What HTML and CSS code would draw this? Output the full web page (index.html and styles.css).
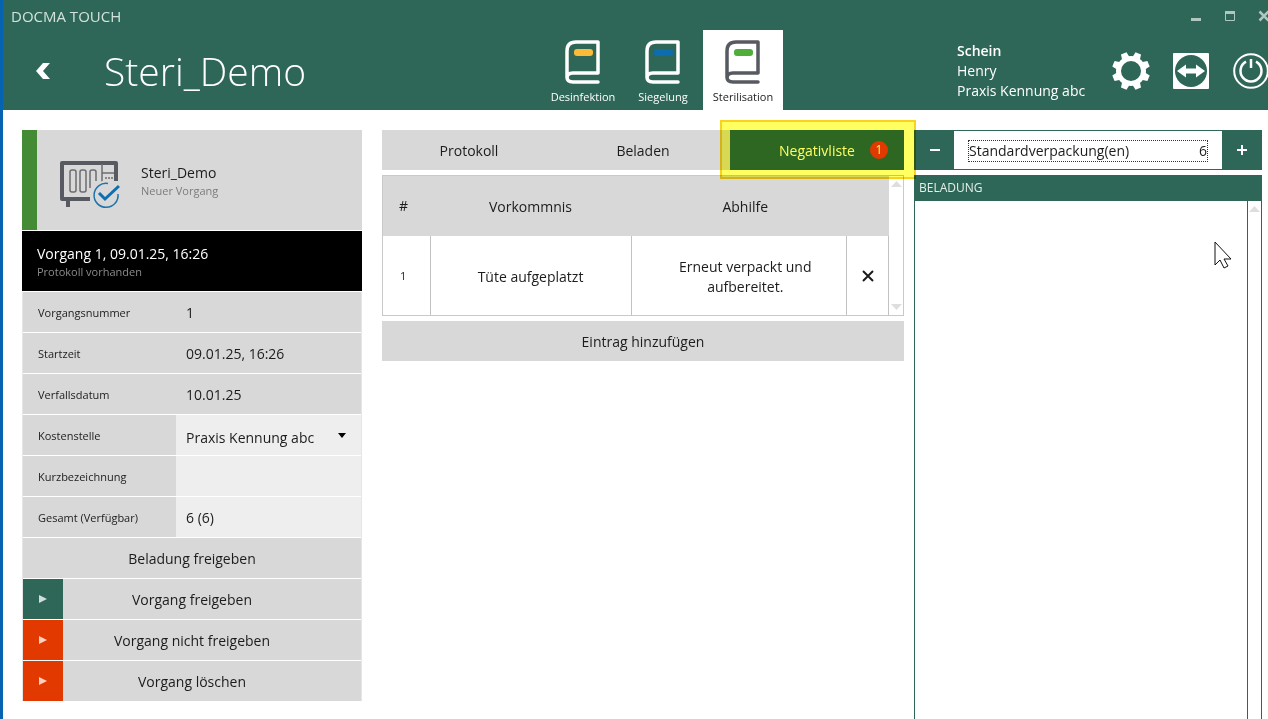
FILE: index.html
```html
<!DOCTYPE html>
<html lang="de">
<head>
  <meta charset="UTF-8" />
  <meta name="viewport" content="width=device-width, initial-scale=1.0"/>
  <title>DOCMA TOUCH</title>
  <link rel="stylesheet" href="styles.css">
</head>
<body>
  <header class="header">
    <div class="titlebar">
      <span class="app-name">DOCMA TOUCH</span>
      <div class="window-buttons">
        <button aria-label="Minimieren"><svg width="12" height="12" viewBox="0 0 12 12"><path d="M1 8h10v3H1z" fill="currentColor"/></svg></button>
        <button aria-label="Maximieren"><svg width="12" height="12" viewBox="0 0 12 12"><path d="M1.500 2v8.500h9V2" fill="none" stroke="currentColor"/><path d="M1 1h10v3H1z" fill="currentColor"/></svg></button>
        <button aria-label="Schließen"><svg width="12" height="12" viewBox="0 0 12 12"><path d="M1.500 1.500l9 9M10.500 1.500l-9 9" stroke="currentColor" stroke-width="2.500"/></svg></button>
      </div>
    </div>

    <div class="header-row">
      <div class="heading">
        <button class="back" aria-label="Zurück"><svg width="14" height="16" viewBox="0 0 14 16"><path d="M7 0h7L7 8l7 8H7L0 8z" fill="#fff"/></svg></button>
        <h1>Steri_Demo</h1>
      </div>

      <nav class="modules">
        <button class="module">
          <svg width="36" height="44" viewBox="0 0 36 44"><path d="M33 33V2H11Q2 2 2 11v26q0 5 6 5h25M33 33H8q-6 0-6 5" fill="none" stroke="currentColor" stroke-width="3.500" stroke-linejoin="round" stroke-linecap="round"/><rect x="9" y="9" width="19" height="7" rx="3" fill="#fbba37"/></svg>
          <span>Desinfektion</span>
        </button>
        <button class="module">
          <svg width="36" height="44" viewBox="0 0 36 44"><path d="M33 33V2H11Q2 2 2 11v26q0 5 6 5h25M33 33H8q-6 0-6 5" fill="none" stroke="currentColor" stroke-width="3.500" stroke-linejoin="round" stroke-linecap="round"/><rect x="9" y="9" width="19" height="7" rx="3" fill="#0b6cb0"/></svg>
          <span>Siegelung</span>
        </button>
        <button class="module active">
          <svg width="36" height="44" viewBox="0 0 36 44"><path d="M33 33V2H11Q2 2 2 11v26q0 5 6 5h25M33 33H8q-6 0-6 5" fill="none" stroke="#575a60" stroke-width="3.500" stroke-linejoin="round" stroke-linecap="round"/><rect x="9" y="9" width="19" height="7" rx="3" fill="#4eae37"/></svg>
          <span>Sterilisation</span>
        </button>
      </nav>

      <div class="account">
        <div class="user">
          <strong>Schein</strong>
          <span>Henry</span>
          <span>Praxis Kennung abc</span>
        </div>
        <button class="tool" aria-label="Einstellungen">
          <svg width="40" height="40" viewBox="-20 -20 40 40" fill="#fff">
            <circle r="12.500" fill="none" stroke="#fff" stroke-width="5"/>
            <g transform="rotate(22.500)">
              <path id="tooth" d="M-4-13l1-6h6l1 6z"/>
              <use href="#tooth" transform="rotate(45)"/>
              <use href="#tooth" transform="rotate(90)"/>
              <use href="#tooth" transform="rotate(135)"/>
              <use href="#tooth" transform="rotate(180)"/>
              <use href="#tooth" transform="rotate(225)"/>
              <use href="#tooth" transform="rotate(270)"/>
              <use href="#tooth" transform="rotate(315)"/>
            </g>
          </svg>
        </button>
        <button class="tool" aria-label="Fernwartung">
          <svg width="36" height="36" viewBox="0 0 36 36"><rect width="36" height="36" rx="1" fill="#fff"/><circle cx="18" cy="18" r="16" fill="#2e6757"/><path d="M4 18l9-6.500v4h10v-4l9 6.500-9 6.500v-4H13v4z" fill="#fff"/></svg>
        </button>
        <button class="tool" aria-label="Abmelden">
          <svg width="36" height="36" viewBox="0 0 36 36" fill="none" stroke="#fff"><circle cx="18" cy="18" r="16.800" stroke-width="2"/><path d="M13 8.700a10.500 10.500 0 1 0 10 0" stroke-width="2.500"/><path d="M18 6v9" stroke-width="2.500"/></svg>
        </button>
      </div>
    </div>
  </header>

  <main class="content">
    <section class="process">
      <div class="device">
        <svg width="60" height="48" viewBox="0 0 60 48" fill="none">
          <path d="M30 38H2V2h54v18" stroke="#575a60" stroke-width="4" stroke-linejoin="round"/>
          <path d="M8 40v6" stroke="#575a60" stroke-width="4"/>
          <g stroke="#696c71" stroke-width="1.500"><rect x="10" y="9" width="6" height="22" rx="2"/><rect x="20" y="9" width="6" height="22" rx="2"/><path d="M30 27V11q0-2 2-2h2q2 0 2 2v9M42 3v18M42 12h12"/></g>
          <path d="M45 17h8" stroke="#696c71" stroke-width="1.500" stroke-dasharray="2 1"/>
          <path d="M34 40V26l8-6h16v20z" fill="#d8d8d8"/>
          <path d="M48 22.500A12 12 0 1 0 58 33" stroke="#1f73ad" stroke-width="1.500"/>
          <path d="M39 32l6 6 14-13" stroke="#0d6eb2" stroke-width="3"/>
        </svg>
        <div class="device-text">
          <div class="name">Steri_Demo</div>
          <div class="hint">Neuer Vorgang</div>
        </div>
      </div>

      <div class="selected">
        <div class="name">Vorgang 1, 09.01.25, 16:26</div>
        <div class="hint">Protokoll vorhanden</div>
      </div>

      <div class="rows">
        <div class="row"><span class="key">Vorgangsnummer</span><span class="value">1</span></div>
        <div class="row"><span class="key">Startzeit</span><span class="value">09.01.25, 16:26</span></div>
        <div class="row"><span class="key">Verfallsdatum</span><span class="value">10.01.25</span></div>
        <div class="row">
          <label class="key" for="kostenstelle">Kostenstelle</label>
          <div class="value light select">
            <select id="kostenstelle"><option>Praxis Kennung abc</option></select>
            <svg width="8" height="5" viewBox="0 0 8 5"><path d="M0 0h8L4 5z"/></svg>
          </div>
        </div>
        <div class="row">
          <label class="key" for="kurz">Kurzbezeichnung</label>
          <div class="value light"><input id="kurz" type="text"></div>
        </div>
        <div class="row"><span class="key">Gesamt (Verfügbar)</span><span class="value light">6 (6)</span></div>
        <button class="action">Beladung freigeben</button>
        <button class="action"><span class="play ok"><svg width="8" height="8" viewBox="0 0 8 8"><path d="M0 0l8 4-8 4z"/></svg></span>Vorgang freigeben</button>
        <button class="action"><span class="play stop"><svg width="8" height="8" viewBox="0 0 8 8"><path d="M0 0l8 4-8 4z"/></svg></span>Vorgang nicht freigeben</button>
        <button class="action"><span class="play stop"><svg width="8" height="8" viewBox="0 0 8 8"><path d="M0 0l8 4-8 4z"/></svg></span>Vorgang löschen</button>
      </div>
    </section>

    <section class="incidents">
      <div class="tabs">
        <button class="tab">Protokoll</button>
        <button class="tab">Beladen</button>
        <button class="tab active">Negativliste<span class="badge">1</span><span class="marker"></span></button>
      </div>

      <div class="table-box">
        <table>
          <colgroup><col class="col-nr"><col class="col-event"><col><col class="col-delete"></colgroup>
          <thead>
            <tr><th class="nr">#</th><th>Vorkommnis</th><th class="remedy">Abhilfe</th><th></th></tr>
          </thead>
          <tbody>
            <tr>
              <td class="nr">1</td>
              <td>Tüte aufgeplatzt</td>
              <td class="remedy">Erneut verpackt und aufbereitet.</td>
              <td class="delete"><button aria-label="Eintrag löschen"><svg width="12" height="12" viewBox="0 0 12 12"><path d="M1 1l10 10M11 1L1 11" stroke="#1c1c1c" stroke-width="2"/></svg></button></td>
            </tr>
          </tbody>
        </table>
        <div class="scrollbar">
          <svg width="11" height="6" viewBox="0 0 11 6"><path d="M0 6l5.500-6L11 6z"/></svg>
          <svg width="11" height="6" viewBox="0 0 11 6"><path d="M0 0l5.500 6L11 0z"/></svg>
        </div>
      </div>

      <button class="add">Eintrag hinzufügen</button>
    </section>

    <section class="loading">
      <div class="stepper">
        <button aria-label="Weniger"><svg width="12" height="12" viewBox="0 0 12 12"><path d="M1 6h10" stroke="#fff" stroke-width="2"/></svg></button>
        <div class="package">
          <label for="anzahl">Standardverpackung(en)</label>
          <input id="anzahl" type="text" inputmode="numeric" value="6">
        </div>
        <button aria-label="Mehr"><svg width="12" height="12" viewBox="0 0 12 12"><path d="M1 6h10M6 1v10" stroke="#fff" stroke-width="2"/></svg></button>
      </div>
      <h2>BELADUNG</h2>
      <div class="load-list">
        <div class="scrollbar">
          <svg width="11" height="6" viewBox="0 0 11 6"><path d="M0 6l5.500-6L11 6z"/></svg>
        </div>
        <svg class="pointer" width="20" height="28" viewBox="0 0 20 28"><path d="M1 1v23l5-5 4 8 4-2-4-7h7z" fill="#fff" stroke="#111"/></svg>
      </div>
    </section>
  </main>
</body>
</html>
```
FILE: styles.css
```css
* {
  box-sizing: border-box;
}
body {
  display: flex;
  flex-direction: column;
  min-height: 100vh;
  margin: 0;
  border-left: 3px solid #0563b1;
  font: 14px/20px "Open Sans", "Noto Sans", sans-serif;
  color: #1c1c1c;
  background: #fff;
}
button, input, select {
  margin: 0;
  padding: 0;
  border: none;
  border-radius: 0;
  font: inherit;
  color: inherit;
  background: none;
}
svg {
  display: block;
}

/* header */
.header {
  overflow: hidden;
  color: #fff;
  background: #2e6757;
}
.titlebar {
  display: flex;
  justify-content: space-between;
  align-items: center;
  height: 30px;
  margin-right: -13px;
  padding-top: 2px;
  padding-left: 8px;
}
.app-name {
  font-size: 15px;
  color: #d3e2dc;
}
.window-buttons {
  display: flex;
  color: #b0c7bf;
}
.window-buttons button {
  display: flex;
  justify-content: center;
  width: 34px;
}
.header-row {
  display: grid;
  grid-template-columns: 540px 240px 1fr;
  height: 80px;
  margin-right: -13px;
}
.heading {
  display: flex;
  align-items: center;
  padding-top: 2px;
}
.back {
  display: flex;
  justify-content: center;
  width: 80px;
}
h1 {
  margin: 0 0 0 21px;
  font-size: 39px;
  line-height: 48px;
  font-weight: 300;
}
.modules {
  display: flex;
}
.module {
  display: flex;
  flex-direction: column;
  align-items: center;
  width: 80px;
  padding-top: 10px;
  font-size: 11px;
  line-height: 16px;
}
.module span {
  margin-top: 5px;
}
.module.active {
  color: #1c1c1c;
  background: #fff;
}
.account {
  display: flex;
  justify-content: flex-end;
  align-items: center;
  padding-top: 2px;
}
.user {
  display: flex;
  flex-direction: column;
  width: 144px;
  white-space: nowrap;
}
.user strong {
  font-weight: 600;
}
.tool {
  display: flex;
  justify-content: center;
  width: 60px;
}

/* columns */
.content {
  flex: 1;
  display: grid;
  grid-template-columns: 340px minmax(0, 1fr) 348px;
  padding: 20px 6px 0 19px;
}
.name {
  font-size: 14px;
  line-height: 20px;
}
.hint {
  font-size: 11px;
  line-height: 16px;
  color: #7c7c7c;
}

/* left */
.device {
  display: flex;
  align-items: center;
  gap: 21px;
  height: 100px;
  padding-top: 10px;
  padding-left: 23px;
  border-left: 15px solid #448b35;
  background: #d8d8d8;
}
.device-text {
  padding-bottom: 8px;
}
.selected {
  height: 60px;
  margin-top: 1px;
  padding: 13px 15px;
  color: #fff;
  background: #000;
}
.selected .hint {
  color: #8c8c8c;
}
.rows {
  display: flex;
  flex-direction: column;
  gap: 1px;
  margin-top: 1px;
  border-left: 1px solid #e6e6e6;
  border-right: 1px solid #e6e6e6;
}
.row {
  display: flex;
  height: 40px;
  line-height: 42px;
  background: #d8d8d8;
}
.key {
  width: 153px;
  padding-left: 15px;
  font-size: 11px;
}
.value {
  flex: 1;
  padding-left: 10px;
}
.light {
  background: #eee;
}
.value input {
  width: 100%;
  height: 40px;
}
.select {
  position: relative;
}
.select select {
  width: 100%;
  height: 40px;
  padding-top: 2px;
  appearance: none;
}
.select svg {
  position: absolute;
  top: 18px;
  right: 15px;
  pointer-events: none;
}
.action {
  position: relative;
  height: 40px;
  padding-top: 2px;
  background: #d8d8d8;
}
.play {
  position: absolute;
  top: 0;
  bottom: 0;
  left: 0;
  display: flex;
  justify-content: center;
  align-items: center;
  width: 40px;
}
.ok {
  background: #2e6757;
  fill: #cfe0da;
}
.stop {
  background: #e13900;
  fill: #ffd0c0;
}

/* middle */
.incidents {
  padding: 0 10px 0 20px;
}
.tabs {
  display: flex;
  background: #d8d8d8;
}
.tab {
  position: relative;
  flex: 1;
  height: 40px;
  padding-top: 2px;
}
.tab.active {
  color: #fff;
  background: #2e6757;
}
.badge {
  position: absolute;
  top: 11px;
  right: 16px;
  width: 18px;
  border-radius: 50%;
  font-size: 12px;
  line-height: 18px;
  background: #e13900;
}
.marker {
  position: absolute;
  inset: -10px -12px -9px -10px;
  z-index: 1;
  border: 2px solid #fad21e;
  background: #ffff62;
  mix-blend-mode: multiply;
  pointer-events: none;
}
.table-box {
  display: flex;
  margin-top: 5px;
  border: 1px solid #c9c9c9;
}
table {
  flex: 1;
  table-layout: fixed;
  border-collapse: collapse;
  text-align: center;
}
.col-nr {
  width: 47px;
}
.col-event {
  width: 201px;
}
.col-delete {
  width: 42px;
}
th {
  height: 60px;
  padding: 2px 0 0;
  font-weight: 400;
  background: #d8d8d8;
}
td {
  height: 79px;
  padding: 2px 30px 0;
  border-right: 1px solid #c2c2c2;
}
.nr {
  padding: 0 6px 0 0;
}
td.nr {
  font-size: 11px;
}
th.remedy {
  padding-left: 13px;
}
td.remedy {
  padding: 2px 24px 0 37px;
}
td.delete {
  padding: 0;
}
.delete button {
  display: flex;
  justify-content: center;
  align-items: center;
  width: 100%;
  height: 40px;
}
.scrollbar {
  display: flex;
  flex-direction: column;
  justify-content: space-between;
  align-items: center;
  width: 14px;
  padding: 5px 0;
  fill: #dedede;
}
.add {
  width: 100%;
  height: 40px;
  margin-top: 5px;
  padding-top: 2px;
  background: #d8d8d8;
}

/* right */
.loading {
  display: flex;
  flex-direction: column;
}
.stepper {
  display: flex;
  height: 40px;
  border: 1px solid #2e6757;
}
.stepper button {
  display: flex;
  justify-content: center;
  align-items: center;
  width: 39px;
  background: #2e6757;
}
.package {
  flex: 1;
  display: flex;
  justify-content: space-between;
  margin: 10px 15px 8px;
  outline: 1px dotted #333;
}
.package input {
  width: 20px;
  text-align: right;
}
h2 {
  margin: 5px 0 0;
  padding: 3px 5px;
  font-size: 12px;
  line-height: 20px;
  font-weight: 400;
  color: #e4eeea;
  background: #2e6757;
}
.load-list {
  position: relative;
  flex: 1;
  display: flex;
  justify-content: flex-end;
  border: 1px solid #2e6757;
  border-width: 0 1px;
}
.load-list .scrollbar {
  border-left: 1px solid #2e6757;
}
.pointer {
  position: absolute;
  top: 40px;
  right: 27px;
}
```
